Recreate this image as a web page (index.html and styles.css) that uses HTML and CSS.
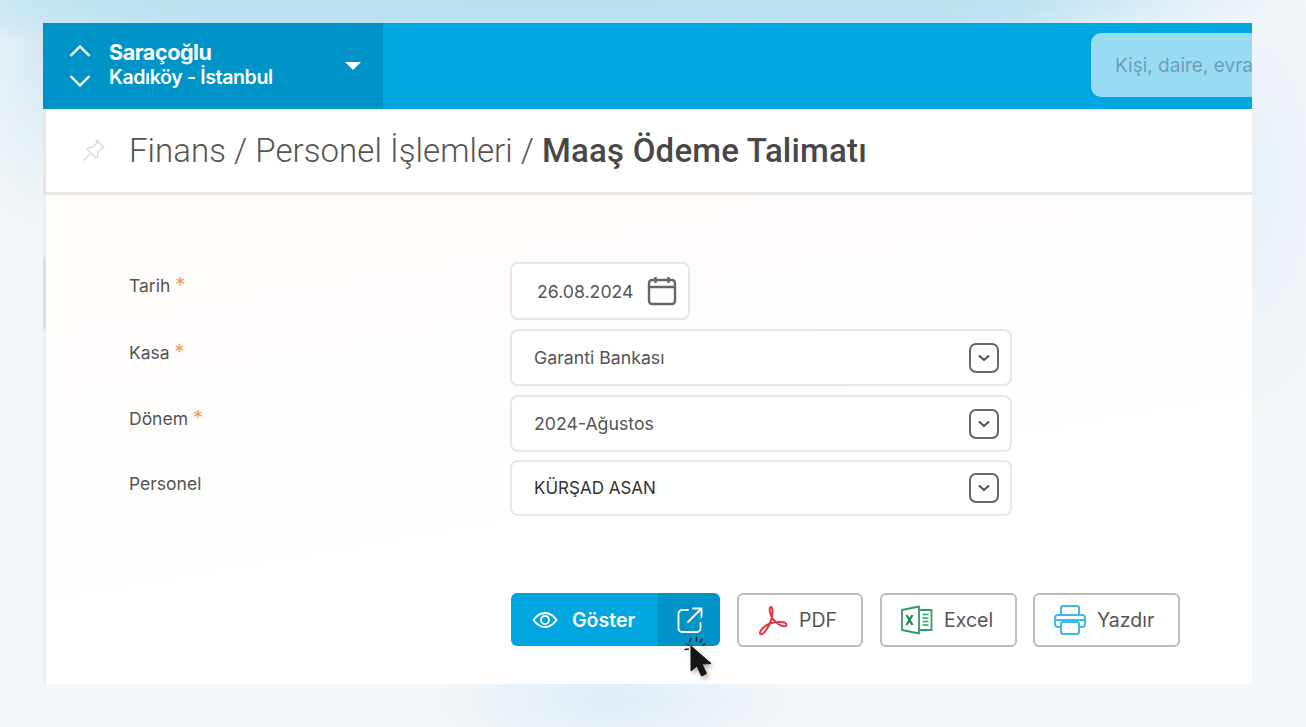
FILE: index.html
```html
<!DOCTYPE html>
<html lang="tr">
<head>
  <meta charset="UTF-8">
  <title>Maaş Ödeme Talimatı</title>
  <link rel="stylesheet" href="styles.css">
</head>
<body>
  <div class="app">
    <header class="topbar">
      <div class="site-picker">
        <div class="site-arrows">
          <svg width="22" height="14" viewBox="0 0 22 14"><path d="M1.500 12 11 2.500l9.500 9.500" fill="none" stroke="#fff" stroke-width="2.400"/></svg>
          <svg width="22" height="14" viewBox="0 0 22 14"><path d="M1.500 2 11 11.500 20.500 2" fill="none" stroke="#fff" stroke-width="2.400"/></svg>
        </div>
        <div class="site-name">
          <strong>Saraçoğlu</strong>
          <span>Kadıköy - İstanbul</span>
        </div>
        <span class="site-caret"></span>
      </div>
      <div class="search">Kişi, daire, evra</div>
    </header>

    <div class="crumbs">
      <svg class="pin" width="24" height="24" viewBox="0 0 24 24" fill="none" stroke="#dcdcdc" stroke-width="1.500" stroke-linejoin="round"><path d="M14.500 2 22 9.500l-2 .8-4.500 4 .2 4.200-1.700 1.500-9-9 1.500-1.700 4.200.2 4-4.500z"/><path d="m8.500 15.500-7 7"/></svg>
      <h1>Finans / Personel İşlemleri / <b>Maaş Ödeme Talimatı</b></h1>
    </div>

    <main class="content">
      <form class="form">
        <label class="lbl">Tarih <i>*</i></label>
        <div class="field field-date">
          <span>26.08.2024</span>
          <svg width="30" height="30" viewBox="0 0 30 30" fill="none" stroke="#666" stroke-width="2.400"><rect x="2" y="4" width="26" height="24" rx="3"/><path d="M2 11h26M8.500 1v6M21.500 1v6"/></svg>
        </div>

        <label class="lbl">Kasa <i>*</i></label>
        <div class="field field-select">
          <span>Garanti Bankası</span>
          <span class="chev"><svg width="14" height="8" viewBox="0 0 14 8"><path d="m2 1.500 5 4.500 5-4.500" fill="none" stroke="#4d4d4d" stroke-width="2"/></svg></span>
        </div>

        <label class="lbl">Dönem <i>*</i></label>
        <div class="field field-select">
          <span>2024-Ağustos</span>
          <span class="chev"><svg width="14" height="8" viewBox="0 0 14 8"><path d="m2 1.500 5 4.500 5-4.500" fill="none" stroke="#4d4d4d" stroke-width="2"/></svg></span>
        </div>

        <label class="lbl lbl-last">Personel</label>
        <div class="field field-select field-last">
          <span>KÜRŞAD ASAN</span>
          <span class="chev"><svg width="14" height="8" viewBox="0 0 14 8"><path d="m2 1.500 5 4.500 5-4.500" fill="none" stroke="#4d4d4d" stroke-width="2"/></svg></span>
        </div>
      </form>

      <div class="actions">
        <div class="btn-show">
          <span class="btn-show-main">
            <svg width="26" height="18" viewBox="0 0 26 18" fill="none" stroke="#fff" stroke-width="1.800"><path d="M1.500 9C5 4 9 2 13 2s8 2 11.500 7C21 14 17 16 13 16S5 14 1.500 9z"/><circle cx="13" cy="9" r="4"/></svg>
            Göster
          </span>
          <span class="btn-show-open">
            <svg width="26" height="26" viewBox="0 0 26 26" fill="none" stroke="#fff" stroke-width="1.800" stroke-linecap="round" stroke-linejoin="round"><path d="M11 3H5a3.500 3.500 0 0 0-3.500 3.500v15A3.500 3.500 0 0 0 5 25h15a3.500 3.500 0 0 0 3.500-3.500V16"/><path d="M11 15 24 2M16 1.500h8.500V10"/></svg>
          </span>
        </div>
        <button class="btn btn-pdf" type="button">
          <svg width="30" height="30" viewBox="0 0 30 30" fill="none" stroke="#e2333f" stroke-width="2" stroke-linejoin="round"><path d="M13 2c-1.500 0-1.500 2.500-1 5 1 5 5 10 9 12.500 3 1.800 7 2.500 7.500.5.500-2.500-4-3-7.500-3-6 0-12 2-16 6-2.500 2.500-4 5-2.500 6 1.500.800 4-1.500 6-4.500 3-4.500 6-11 6-17C14.500 5 14.500 2 13 2z"/></svg>
          PDF
        </button>
        <button class="btn btn-excel" type="button">
          <svg width="32" height="30" viewBox="0 0 32 30"><path d="M1 5 18 1.500v27L1 25z" fill="#fff" stroke="#2f9e62" stroke-width="1.800" stroke-linejoin="round"/><path d="M18 5h12.500v20H18" fill="none" stroke="#2f9e62" stroke-width="1.800"/><path d="M21.500 9.500h6M21.500 13h6M21.500 16.500h6M21.500 20h6" stroke="#2f9e62" stroke-width="1.500"/><path d="m5.500 10 6 10M11.500 10l-6 10" stroke="#1f8a50" stroke-width="2.200"/></svg>
          Excel
        </button>
        <button class="btn btn-print" type="button">
          <svg width="32" height="30" viewBox="0 0 32 30" fill="none" stroke="#3cb9ee" stroke-width="2" stroke-linejoin="round"><path d="M7 10V3a2 2 0 0 1 2-2h14a2 2 0 0 1 2 2v7"/><path d="M7 22H4a3 3 0 0 1-3-3v-6a3 3 0 0 1 3-3h24a3 3 0 0 1 3 3v6a3 3 0 0 1-3 3h-3"/><path d="M1 15h30"/><rect x="7" y="17" width="18" height="12" rx="2"/></svg>
          Yazdır
        </button>
      </div>
    </main>

    <svg class="cursor" width="36" height="46" viewBox="0 0 36 46">
      <path d="M11 4.500 9.500 8M16.500 3v4M22 5l-2 3.500M6 9.500l3 2M25.500 9.500l-3 2M5 15.500l3.500-.5" stroke="#222" stroke-width="1.300" stroke-linecap="round"/>
      <path d="M11 12v25l6-5 4.500 10 5-2.500-4.500-9.500 9-.500z" fill="#141414" stroke="#141414" stroke-width="1" stroke-linejoin="round"/>
    </svg>
  </div>
</body>
</html>
```

FILE: styles.css
```css
html, body {
  margin: 0;
  height: 727px;
  overflow: hidden;
}
body {
  font-family: 'Inter', 'Noto Sans', sans-serif;
  background-color: #f5f8fb;
  background-image:
    radial-gradient(ellipse 190px 62px at 610px 700px, #dcecf5 0%, rgba(220,236,245,0) 100%),
    radial-gradient(ellipse 720px 64px at 560px 0, #b9dfef 0%, #bfe2f1 65%, rgba(191,226,241,0) 100%),
    radial-gradient(ellipse 90px 190px at 43px 50px, #d5e9f2 0%, rgba(213,233,242,0) 100%),
    radial-gradient(ellipse 110px 260px at 1252px 180px, #e8f1f8 0%, rgba(232,241,248,0) 100%);
  background-repeat: no-repeat;
}

.app {
  position: relative;
  width: 1209px;
  height: 661px;
  margin: 23px 0 0 43px;
  overflow: hidden;
  background: #fff;
}

/* ust bar */
.topbar {
  display: flex;
  height: 86px;
  background: #00a6e0;
}
.site-picker {
  display: flex;
  align-items: center;
  flex: 0 0 340px;
  box-sizing: border-box;
  padding: 0 22px 0 26px;
  background: #0093c8;
  color: #fff;
}
.site-arrows {
  display: flex;
  flex-direction: column;
  gap: 16px;
  margin-right: 18px;
}
.site-arrows svg {
  display: block;
}
.site-name {
  display: flex;
  flex-direction: column;
  flex: 1;
  margin-top: -3px;
  letter-spacing: -0.4px;
}
.site-name strong {
  font-size: 21.500px;
  line-height: 25px;
  font-weight: 700;
}
.site-name span {
  font-size: 19.600px;
  line-height: 24px;
  font-weight: 600;
}
.site-caret {
  width: 0;
  height: 0;
  border-left: 8px solid transparent;
  border-right: 8px solid transparent;
  border-top: 8px solid #fff;
}
.search {
  flex: 0 0 300px;
  box-sizing: border-box;
  height: 64px;
  margin: 10px 0 0 708px;
  padding: 1px 0 0 24px;
  border-radius: 10px;
  background: #9adbf4;
  color: #6f9fb8;
  font-size: 19px;
  line-height: 64px;
  white-space: nowrap;
}

/* baslik */
.crumbs {
  display: flex;
  align-items: center;
  box-sizing: border-box;
  height: 86px;
  padding: 0 0 1px 36px;
  border-left: 3px solid #e6e6e6;
  border-bottom: 3px solid #e8e8e8;
}
.pin {
  margin-right: 23px;
}
.crumbs h1 {
  margin: 0;
  font-family: 'Roboto', sans-serif;
  font-size: 33px;
  font-weight: 300;
  letter-spacing: 0.05px;
  color: #555;
  white-space: nowrap;
}
.crumbs b {
  font-weight: 500;
  letter-spacing: 0.2px;
  color: #484848;
}

/* form */
.content {
  position: relative;
  box-sizing: border-box;
  height: 492px;
  padding: 67px 0 0 83px;
  border-left: 3px solid #eceff1;
  background: linear-gradient(170deg, #fffcf9 0%, #fffdfc 30%, #fff 60%);
}
/* soldaki ince scroll izi */
.content::before {
  content: "";
  position: absolute;
  left: -3px;
  top: 62px;
  width: 3px;
  height: 72px;
  background: #dedede;
}
.form {
  display: grid;
  grid-template-columns: 381px 502px;
  row-gap: 9px;
}
.lbl {
  padding-top: 14px;
  font-size: 17.500px;
  line-height: 20px;
  color: #555;
}
.lbl i {
  color: #f79a53;
  font-size: 20px;
  line-height: 16px;
  font-style: normal;
}
.lbl-last {
  margin-top: -1px;
}
.field {
  display: flex;
  align-items: center;
  box-sizing: border-box;
  height: 57px;
  border: 2px solid #e6e6e6;
  border-radius: 8px;
  background: #fff;
  font-size: 17.700px;
  color: #555;
}
.field-date {
  width: 180px;
  height: 58px;
  padding: 0 11px 0 25px;
  justify-content: space-between;
}
.field-select {
  padding: 0 11px 0 22px;
  justify-content: space-between;
}
.field-last {
  height: 56px;
  margin-top: -1px;
  font-size: 17px;
  color: #333;
}
.chev {
  display: flex;
  align-items: center;
  justify-content: center;
  box-sizing: border-box;
  width: 30px;
  height: 30px;
  border: 2px solid #666;
  border-radius: 7px;
}

/* butonlar */
.actions {
  display: flex;
  gap: 17px;
  margin: 77px 0 0 382px;
}
.btn-show {
  display: flex;
  width: 209px;
  height: 53px;
  border-radius: 6px;
  overflow: hidden;
  color: #fff;
  font-size: 19.500px;
  font-weight: 600;
}
.btn-show-main {
  display: flex;
  align-items: center;
  gap: 14px;
  flex: 1;
  padding-left: 21px;
  background: #00a6e0;
}
.btn-show-open {
  display: flex;
  align-items: center;
  justify-content: center;
  width: 62px;
  padding-left: 2px;
  box-sizing: border-box;
  background: #0093c8;
}
.btn {
  display: flex;
  align-items: center;
  gap: 11px;
  box-sizing: border-box;
  height: 54px;
  margin: 0;
  padding: 0 0 0 19px;
  border: 2px solid #bdbdbd;
  border-radius: 6px;
  background: #fff;
  font-family: inherit;
  font-size: 19.500px;
  color: #555;
}
.btn-pdf { width: 126px; }
.btn-excel { width: 137px; }
.btn-print { width: 147px; margin-left: -1px; }

.cursor {
  position: absolute;
  left: 637px;
  top: 611px;
  filter: drop-shadow(2px 3px 2px rgba(0,0,0,0.3));
}
```
